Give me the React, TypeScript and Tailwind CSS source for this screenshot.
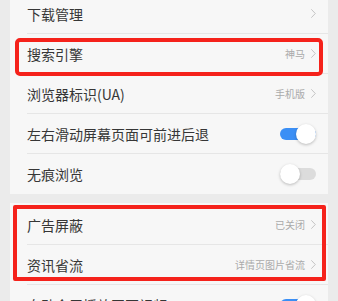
import React from 'react';

type Row =
  | { kind: 'link'; title: string; value?: string }
  | { kind: 'toggle'; title: string; on: boolean };

const Chevron = () => (
  <svg width="5" height="9" viewBox="0 0 5 9" fill="none" className="ml-[6px] flex-shrink-0">
    <path d="M0.6 0.6 L4.3 4.5 L0.6 8.4" stroke="#c4c4c4" strokeWidth="1" strokeLinecap="round" strokeLinejoin="round" />
  </svg>
);

const Toggle: React.FC<{ on: boolean }> = ({ on }) => (
  <div className="relative w-[36px] h-[20px] flex items-center">
    <div className={`w-full h-[12px] rounded-full ${on ? 'bg-[#3b8ff5]' : 'bg-[#dcdcdc]'}`} />
    <div
      className={`absolute top-0 w-[20px] h-[20px] rounded-full bg-white shadow-[0_1px_3px_rgba(0,0,0,0.25)] ${on ? 'right-0' : 'left-0'}`}
    />
  </div>
);

const SettingRow: React.FC<{ row: Row; last?: boolean; height?: string }> = ({ row, last, height = 'h-[40px]' }) => (
  <div className={`${height} pl-[17px] flex`}>
    <div className={`flex-1 flex items-center pr-[12px] ${last ? '' : 'border-b border-[#e6e6e6]'}`}>
      <span className="flex-1 text-[14px] text-[#363636] leading-none">{row.title}</span>
      {row.kind === 'link' ? (
        <div className="flex items-center">
          {row.value && <span className="text-[10px] text-[#aaaaaa] leading-none">{row.value}</span>}
          <Chevron />
        </div>
      ) : (
        <Toggle on={row.on} />
      )}
    </div>
  </div>
);

const group1: Row[] = [
  { kind: 'link', title: '下载管理' },
  { kind: 'link', title: '搜索引擎', value: '神马' },
  { kind: 'link', title: '浏览器标识(UA)', value: '手机版' },
  { kind: 'toggle', title: '左右滑动屏幕页面可前进后退', on: true },
  { kind: 'toggle', title: '无痕浏览', on: false },
];

const group2: Row[] = [
  { kind: 'link', title: '广告屏蔽', value: '已关闭' },
  { kind: 'link', title: '资讯省流', value: '详情页图片省流' },
  { kind: 'toggle', title: '自动全屏播放网页视频', on: true },
];

export default function App() {
  return (
    <div
      className="relative w-[338px] h-[301px] overflow-hidden bg-[#ebebeb] px-[10px]"
      style={{ fontFamily: '"Noto Sans CJK SC", "Noto Sans", sans-serif' }}
    >
      <div className="-mt-[6px] bg-[#f7f7f7]">
        {group1.map((r, i) => (
          <SettingRow key={r.title} row={r} last={i === group1.length - 1} />
        ))}
      </div>
      <div className="mt-[9px] bg-[#f7f7f7]">
        {group2.map((r, i) => (
          <SettingRow key={r.title} row={r} height={i === 0 ? 'h-[42px] pt-[2px]' : 'h-[40px]'} last={i === group2.length - 1} />
        ))}
      </div>

      {/* red annotation boxes */}
      <div className="absolute left-[15px] top-[38px] w-[308px] h-[38px] border-[4px] border-[#f5221b] rounded-[5px]" />
      <div className="absolute left-[13px] top-[205px] w-[313px] h-[76px] border-[4px] border-[#f5221b] rounded-[2px]" />
    </div>
  );
}
